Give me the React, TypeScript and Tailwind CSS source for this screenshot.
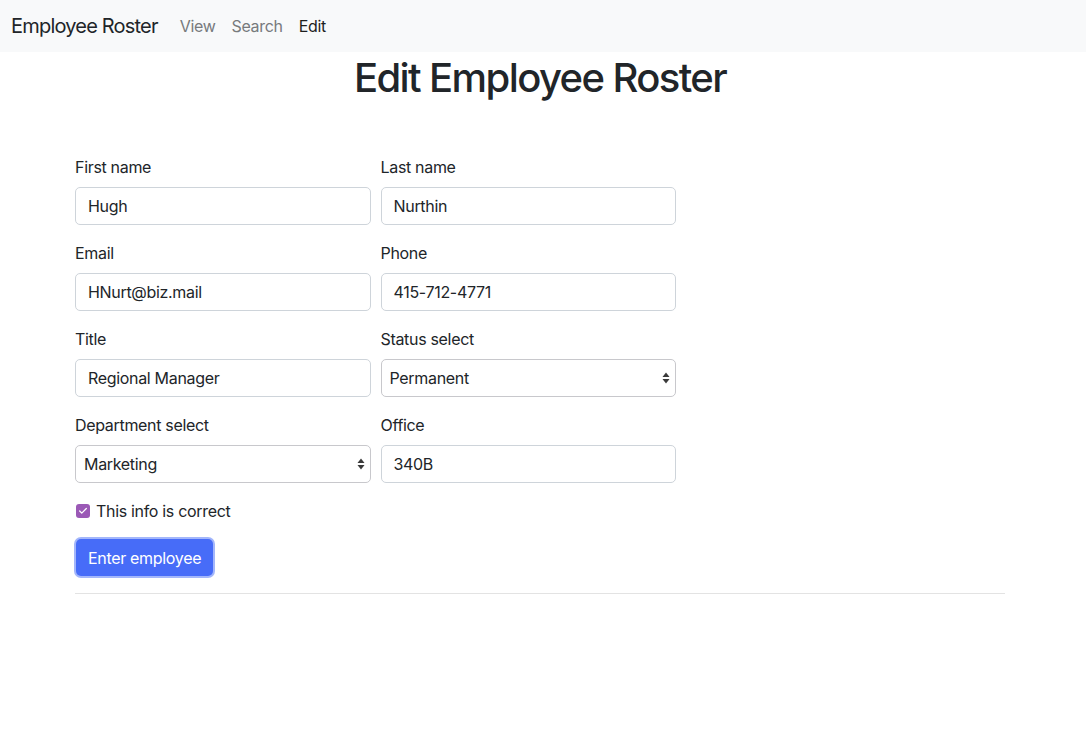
import { Check } from 'lucide-react'

interface FieldProps {
    label: string
    value: string
    select?: boolean
}

function SelectArrows() {
    return (
        <svg width="8" height="14" viewBox="0 0 8 14" className="absolute right-[5px] top-1/2 -translate-y-1/2">
            <path d="M4 1.5 L7.5 6 H0.5 Z" fill="#3a3a3a" />
            <path d="M4 12.5 L7.5 8 H0.5 Z" fill="#3a3a3a" />
        </svg>
    )
}

function Field({ label, value, select }: FieldProps) {
    return (
        <div className="flex flex-col">
            <label className="mb-2 text-base leading-6 text-[#212529]">{label}</label>
            {select ? (
                <div className="relative h-[38px] rounded-[5px] border border-[#c8c8cc] bg-white pl-[8px] flex items-center text-base text-[#212529]">
                    {value}
                    <SelectArrows />
                </div>
            ) : (
                <div className="h-[38px] rounded-[5px] border border-[#ced4da] bg-white px-3 flex items-center text-base text-[#212529]">
                    {value}
                </div>
            )}
        </div>
    )
}

export default function App() {
    const navItems = [
        { label: 'View', active: false },
        { label: 'Search', active: false },
        { label: 'Edit', active: true },
    ]

    return (
        <div className="min-h-screen bg-white font-['Inter',sans-serif] tracking-[-0.02em] text-[#212529]">
            {/* Navbar */}
            <nav className="h-[52px] bg-[#f8f9fa] flex items-center px-[11px]">
                <span className="text-[20px] leading-[30px] tracking-[-0.04em] mr-[14px]">Employee Roster</span>
                <div className="flex">
                    {navItems.map((item) => (
                        <span
                            key={item.label}
                            className={`px-2 text-base leading-6 ${item.active ? 'text-[#1e1e1e]' : 'text-[#777a7d]'}`}
                        >
                            {item.label}
                        </span>
                    ))}
                </div>
            </nav>

            <h1 className="text-center text-[40px] leading-[52px] font-medium tracking-[-0.04em] pr-[6px]">Edit Employee Roster</h1>

            <div className="mx-auto w-[960px] px-3 mt-[51px]">
                <div className="w-[601px] grid grid-cols-2 gap-x-[10px] gap-y-4">
                    <Field label="First name" value="Hugh" />
                    <Field label="Last name" value="Nurthin" />
                    <Field label="Email" value="HNurt@biz.mail" />
                    <Field label="Phone" value="415-712-4771" />
                    <Field label="Title" value="Regional Manager" />
                    <Field label="Status select" value="Permanent" select />
                    <Field label="Department select" value="Marketing" select />
                    <Field label="Office" value="340B" />
                </div>

                <div className="mt-[16px] flex items-center gap-[6px] pl-[1px]">
                    <span className="w-[14px] h-[14px] rounded-[3px] bg-[#9b59b6] flex items-center justify-center">
                        <Check size={10} strokeWidth={3} color="white" />
                    </span>
                    <span className="text-base leading-6">This info is correct</span>
                </div>

                <button className="mt-[16px] ml-[1px] h-[37px] px-3 rounded-[5px] bg-[#476cf8] text-white text-base ring-2 ring-[#a3b6fb]">
                    Enter employee
                </button>

                <hr className="mt-[17px] w-[930px] border-t border-[#e3e3e3]" />
            </div>
        </div>
    )
}
